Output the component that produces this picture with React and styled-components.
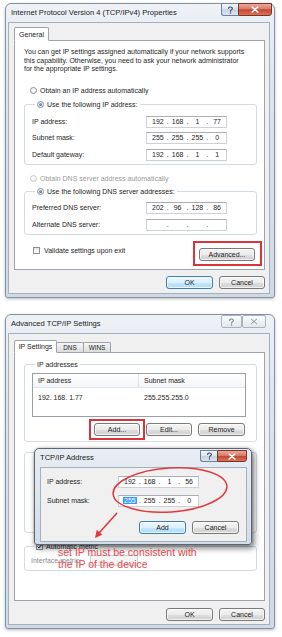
import React from "react";
import styled, { createGlobalStyle } from "styled-components";

const GlobalStyle = createGlobalStyle`
  html, body { margin: 0; padding: 0; background: #ffffff; }
  body {
    font-family: "Liberation Sans", Arial, sans-serif;
    font-size: 7px;
    color: #1e1e1e;
  }
  *, *::before, *::after { box-sizing: border-box; }
`;

const Page = styled.div`
  width: 282px;
  height: 637px;
  padding-top: 3px;
  display: flex;
  flex-direction: column;
  gap: 16px;
  overflow: hidden;
`;

const Frame = styled.div`
  position: relative;
  flex: none;
  margin-left: 5px;
  width: 270px;
  height: ${(p) => p.$h}px;
  display: flex;
  flex-direction: column;
  padding: 0 4px 3px 2px;
  border: 1px solid #8592a3;
  border-radius: 6px 6px 3px 3px;
  background: linear-gradient(180deg, #eef2f7 0%, #dbe3ec 30%, #d0dae5 100%);
  box-shadow: 0 1px 3px rgba(40, 50, 70, 0.35);
`;

const TitleBar = styled.div`
  flex: none;
  height: 18px;
  display: flex;
  align-items: flex-start;
  padding-left: ${(p) => p.$pl ?? 3}px;
`;

const Title = styled.div`
  font-size: 7.6px;
  line-height: 18px;
  color: #1a1a1a;
  white-space: nowrap;
`;

const Caption = styled.div`
  margin-left: auto;
  margin-top: ${(p) => p.$top}px;
  margin-right: ${(p) => p.$right}px;
  display: flex;
`;

const capSkins = {
  help: `
    background: linear-gradient(180deg, #f1f5fa 0%, #d9e3ee 48%, #c3d1e1 52%, #dbe6f1 100%);
    border: 1px solid #6f8196;
    border-right: none;
    border-radius: 0 0 0 3px;
  `,
  close: `
    background: linear-gradient(180deg, #e9a898 0%, #d87c68 45%, #c4472f 52%, #d8735c 100%);
    border: 1px solid #7d3328;
    border-radius: 0 0 3px 0;
  `,
  idle: `
    background: linear-gradient(180deg, #fdfdfe 0%, #eef1f5 50%, #e3e8ee 100%);
    border: 1px solid #a9b3be;
    border-radius: 2px;
  `,
};

const CapButton = styled.div`
  width: ${(p) => p.$w}px;
  height: ${(p) => p.$h}px;
  display: flex;
  align-items: center;
  justify-content: center;
  ${(p) => capSkins[p.$skin]}
`;

const HelpGlyph = ({ color }) => (
  <svg width="7" height="8" viewBox="0 0 7 8">
    <path
      d="M1.6 2.4 C1.6 0.5 5.4 0.5 5.4 2.4 C5.4 3.8 3.5 3.8 3.5 5.2"
      fill="none"
      stroke={color}
      strokeWidth="1.1"
      strokeLinecap="round"
    />
    <circle cx="3.5" cy="6.9" r="0.75" fill={color} />
  </svg>
);

const CloseGlyph = ({ color, weight }) => (
  <svg width="8" height="7" viewBox="0 0 8 7">
    <path d="M1.2 1 L6.8 6 M6.8 1 L1.2 6" stroke={color} strokeWidth={weight} strokeLinecap="round" />
  </svg>
);

const Client = styled.div`
  flex: 1;
  display: flex;
  flex-direction: column;
  padding: ${(p) => p.$pt}px ${(p) => p.$pr ?? 4}px 0 ${(p) => p.$pl ?? 5}px;
  background: #f0f0f0;
  border: 1px solid #a3b0c0;
`;

const TabStrip = styled.div`
  position: relative;
  z-index: 1;
  flex: none;
  display: flex;
  align-items: flex-end;
  height: ${(p) => p.$h}px;
`;

const Tab = styled.div`
  width: ${(p) => p.$w}px;
  height: ${(p) => (p.$active ? p.$h + 1 : p.$h - 2)}px;
  margin-bottom: ${(p) => (p.$active ? -1 : 0)}px;
  display: flex;
  align-items: center;
  justify-content: center;
  border: 1px solid #9ea4ad;
  border-bottom: ${(p) => (p.$active ? "1px solid #ffffff" : "none")};
  border-radius: 2px 2px 0 0;
  background: ${(p) => (p.$active ? "#ffffff" : "linear-gradient(180deg, #f6f6f6, #dcdcdc)")};
  font-size: ${(p) => (p.$active ? 7 : 6.4)}px;
  & + & {
    margin-left: -1px;
  }
`;

const Panel = styled.div`
  flex: none;
  height: ${(p) => p.$h}px;
  display: flex;
  flex-direction: column;
  padding: ${(p) => p.$pt}px 7px 0 9px;
  background: #ffffff;
  border: 1px solid #9ea4ad;
`;

const Intro = styled.p`
  margin: 0;
  line-height: 8.5px;
  white-space: nowrap;
`;

const OptionRow = styled.div`
  display: flex;
  align-items: center;
  gap: 3px;
  height: 10px;
  margin-top: ${(p) => p.$mt}px;
  padding-left: 6px;
  color: ${(p) => (p.$disabled ? "#9a9a9a" : "inherit")};
`;

const Radio = styled.span`
  position: relative;
  flex: none;
  width: 7px;
  height: 7px;
  border-radius: 50%;
  border: 1px solid ${(p) => (p.$disabled ? "#c8cacc" : "#8a9199")};
  background: radial-gradient(circle at 40% 35%, #ffffff 0%, #e6e8ea 100%);
  &::after {
    content: "";
    display: ${(p) => (p.$checked ? "block" : "none")};
    position: absolute;
    inset: 1px;
    border-radius: 50%;
    background: radial-gradient(circle at 40% 35%, #8fb0d6 0%, #2c4f7c 100%);
  }
`;

const Checkbox = styled.span`
  flex: none;
  width: 7px;
  height: 7px;
  display: flex;
  align-items: center;
  justify-content: center;
  border: 1px solid #8f8f8f;
  background: linear-gradient(180deg, #e4e4e4, #ffffff);
`;

const Group = styled.fieldset`
  margin: ${(p) => p.$mt}px 0 0 0;
  padding: ${(p) => p.$pt}px ${(p) => p.$pr ?? 4}px ${(p) => p.$pb}px ${(p) => p.$pl ?? 7}px;
  min-width: 0;
  min-height: ${(p) => p.$minH ?? 0}px;
  border: 1px solid #d3dce3;
  border-radius: 3px;
`;

const Legend = styled.legend`
  display: flex;
  align-items: center;
  gap: 3px;
  height: 10px;
  margin-left: 3px;
  padding: 0 2px;
  color: ${(p) => (p.$muted ? "#5a5a5a" : "inherit")};
`;

const FieldGrid = styled.div`
  display: grid;
  grid-template-columns: ${(p) => p.$labelW}px 81px;
  row-gap: ${(p) => p.$gap}px;
  align-items: center;
`;

const Label = styled.span`
  line-height: 12px;
  white-space: nowrap;
  color: ${(p) => (p.$disabled ? "#8d8d8d" : "inherit")};
`;

const IpBox = styled.div`
  width: 81px;
  height: 12px;
  display: grid;
  grid-template-columns: 1fr 4px 1fr 4px 1fr 4px 1fr;
  align-items: center;
  padding: 0 1px 0 3px;
  border: 1px solid #cdd1d6;
  border-top-color: #abafb5;
  background: #ffffff;
  line-height: 10px;
  text-align: center;
`;

const Sel = styled.span`
  background: #3399ff;
  color: #ffffff;
  padding: 0 1px;
`;

function IpField({ parts = ["", "", "", ""], selectFirst }) {
  return (
    <IpBox>
      {parts.map((part, i) => (
        <React.Fragment key={i}>
          {i > 0 && <span>.</span>}
          <span>{i === 0 && selectFirst ? <Sel>{part}</Sel> : part}</span>
        </React.Fragment>
      ))}
    </IpBox>
  );
}

const ValidateRow = styled.div`
  display: flex;
  justify-content: space-between;
  align-items: flex-start;
  margin-top: 11px;
  padding: 0 2px 0 9px;
`;

const CheckLabel = styled.div`
  display: flex;
  align-items: center;
  gap: 4px;
  height: 10px;
  color: ${(p) => (p.$disabled ? "#8d8d8d" : "inherit")};
`;

const Button = styled.div`
  width: ${(p) => p.$w}px;
  height: 13px;
  margin-top: ${(p) => p.$mt ?? 0}px;
  display: flex;
  align-items: center;
  justify-content: center;
  border: 1px solid ${(p) => (p.$default ? "#3c7fb1" : "#7a7a7a")};
  border-radius: 3px;
  background: ${(p) =>
    p.$default
      ? "linear-gradient(180deg, #ecf7fd 0%, #dcf0fb 50%, #c4e7fb 51%, #b2dbf3 100%)"
      : "linear-gradient(180deg, #f4f4f4 0%, #ececec 50%, #dedede 51%, #d0d0d0 100%)"};
  box-shadow: inset 0 0 0 1px rgba(255, 255, 255, 0.7);
  color: #1b1b1b;
  white-space: nowrap;
`;

const Marked = styled.div`
  position: relative;
  &::after {
    content: "";
    position: absolute;
    inset: ${(p) => p.$inset};
    border: 2px solid #d9343b;
    pointer-events: none;
  }
`;

const Footer = styled.div`
  flex: none;
  display: flex;
  justify-content: flex-end;
  gap: 6px;
  margin-top: ${(p) => p.$mt}px;
  padding-right: ${(p) => p.$pr ?? 0}px;
`;

const ListView = styled.div`
  height: 44px;
  border: 1px solid #9aa0a8;
  background: #ffffff;
`;

const ListHeader = styled.div`
  display: flex;
  height: 14px;
  align-items: stretch;
  background: linear-gradient(180deg, #ffffff, #f4f5f7);
  border-bottom: 1px solid #e1e4e8;
`;

const ListRow = styled.div`
  display: flex;
  height: 10px;
  margin-top: 4px;
  align-items: center;
`;

const Col = styled.div`
  width: ${(p) => (p.$w ? `${p.$w}px` : "auto")};
  flex: ${(p) => (p.$w ? "none" : "1")};
  display: flex;
  align-items: center;
  padding-left: 5px;
  border-right: ${(p) => (p.$divider ? "1px solid #e0e3e7" : "none")};
  white-space: nowrap;
`;

const ButtonRow = styled.div`
  display: flex;
  justify-content: flex-end;
  gap: 6px;
  margin-top: 6px;
  padding-right: 1px;
`;

const MetricRow = styled.div`
  display: flex;
  align-items: center;
  height: 11px;
`;

const SmallBox = styled.div`
  width: 48px;
  height: 11px;
  margin-left: 9px;
  border: 1px solid #cfd3d8;
  background: #f4f4f4;
`;

const Dialog = styled.div`
  position: absolute;
  left: 28px;
  top: 133px;
  z-index: 2;
  width: 218px;
  height: 97px;
  display: flex;
  flex-direction: column;
  padding: 0 4px 2px 5px;
  border: 1px solid #5b6674;
  border-radius: 5px 5px 3px 3px;
  background: linear-gradient(180deg, #e8edf3 0%, #d3dde8 100%);
  box-shadow: 2px 3px 6px rgba(0, 0, 0, 0.55), 0 0 2px rgba(0, 0, 0, 0.3);
`;

const DialogClient = styled.div`
  flex: 1;
  display: flex;
  flex-direction: column;
  padding: 8px 7px 0 6px;
  background: #f0f0f0;
  border: 1px solid #a3b0c0;
`;

const Scribble = styled.svg`
  position: absolute;
  left: 80px;
  top: 147px;
  z-index: 3;
  overflow: visible;
  pointer-events: none;
`;

const Note = styled.div`
  position: absolute;
  left: 52px;
  top: 231px;
  z-index: 3;
  font-size: 10.5px;
  line-height: 12px;
  color: #e34a4f;
  white-space: nowrap;
`;

function CheckMark() {
  return (
    <svg width="5" height="5" viewBox="0 0 5 5">
      <path d="M0.6 2.6 L2 4 L4.4 0.8" fill="none" stroke="#2b3d55" strokeWidth="1" />
    </svg>
  );
}

function PropertiesWindow() {
  return (
    <Frame $h={295}>
      <TitleBar>
        <Title>Internet Protocol Version 4 (TCP/IPv4) Properties</Title>
        <Caption $top={-1} $right={-2}>
          <CapButton $skin="help" $w={17} $h={13}>
            <HelpGlyph color="#3d4c60" />
          </CapButton>
          <CapButton $skin="close" $w={34} $h={13}>
            <CloseGlyph color="#ffffff" weight={1.6} />
          </CapButton>
        </Caption>
      </TitleBar>
      <Client $pt={4}>
        <TabStrip $h={13}>
          <Tab $active $w={35} $h={13}>General</Tab>
        </TabStrip>
        <Panel $h={230} $pt={7}>
          <Intro>
            You can get IP settings assigned automatically if your network supports
            <br />
            this capability. Otherwise, you need to ask your network administrator
            <br />
            for the appropriate IP settings.
          </Intro>
          <OptionRow $mt={12}>
            <Radio />
            Obtain an IP address automatically
          </OptionRow>
          <Group $mt={4} $pt={6} $pb={3}>
            <Legend>
              <Radio $checked />
              Use the following IP address:
            </Legend>
            <FieldGrid $labelW={114} $gap={4.5}>
              <Label>IP address:</Label>
              <IpField parts={["192", "168", "1", "77"]} />
              <Label>Subnet mask:</Label>
              <IpField parts={["255", "255", "255", "0"]} />
              <Label>Default gateway:</Label>
              <IpField parts={["192", "168", "1", "1"]} />
            </FieldGrid>
          </Group>
          <OptionRow $mt={9} $disabled>
            <Radio $disabled />
            Obtain DNS server address automatically
          </OptionRow>
          <Group $mt={3} $pt={5} $pb={3}>
            <Legend>
              <Radio $checked />
              Use the following DNS server addresses:
            </Legend>
            <FieldGrid $labelW={114} $gap={5}>
              <Label>Preferred DNS server:</Label>
              <IpField parts={["202", "96", "128", "86"]} />
              <Label>Alternate DNS server:</Label>
              <IpField />
            </FieldGrid>
          </Group>
          <ValidateRow>
            <CheckLabel>
              <Checkbox />
              Validate settings upon exit
            </CheckLabel>
            <Marked $inset="-5px -7px -5px -6px">
              <Button $w={56} $mt={2}>Advanced...</Button>
            </Marked>
          </ValidateRow>
        </Panel>
        <Footer $mt={6}>
          <Button $w={47} $default>OK</Button>
          <Button $w={46}>Cancel</Button>
        </Footer>
      </Client>
    </Frame>
  );
}

function AddressDialog() {
  return (
    <Dialog>
      <TitleBar $pl={0}>
        <Title>TCP/IP Address</Title>
        <Caption $top={1} $right={0}>
          <CapButton $skin="help" $w={17} $h={12}>
            <HelpGlyph color="#3d4c60" />
          </CapButton>
          <CapButton $skin="close" $w={30} $h={12}>
            <CloseGlyph color="#ffffff" weight={1.6} />
          </CapButton>
        </Caption>
      </TitleBar>
      <DialogClient>
        <FieldGrid $labelW={71} $gap={7}>
          <Label>IP address:</Label>
          <IpField parts={["192", "168", "1", "56"]} />
          <Label>Subnet mask:</Label>
          <IpField parts={["255", "255", "255", "0"]} selectFirst />
        </FieldGrid>
        <Footer $mt={14}>
          <Button $w={47} $default>Add</Button>
          <Button $w={47}>Cancel</Button>
        </Footer>
      </DialogClient>
    </Dialog>
  );
}

function AdvancedWindow() {
  return (
    <Frame $h={315}>
      <TitleBar>
        <Title>Advanced TCP/IP Settings</Title>
        <Caption $top={0} $right={4}>
          <CapButton $skin="idle" $w={21} $h={13}>
            <HelpGlyph color="#7d8895" />
          </CapButton>
          <CapButton $skin="idle" $w={24} $h={13}>
            <CloseGlyph color="#8a95a2" weight={1} />
          </CapButton>
        </Caption>
      </TitleBar>
      <Client $pt={6}>
        <TabStrip $h={12}>
          <Tab $active $w={43} $h={12}>IP Settings</Tab>
          <Tab $w={28} $h={12}>DNS</Tab>
          <Tab $w={28} $h={12}>WINS</Tab>
        </TabStrip>
        <Panel $h={249} $pt={6}>
          <Group $mt={0} $pt={4} $pb={5} $pr={10}>
            <Legend>IP addresses</Legend>
            <ListView>
              <ListHeader>
                <Col $w={106} $divider>IP address</Col>
                <Col>Subnet mask</Col>
              </ListHeader>
              <ListRow>
                <Col $w={106}>192. 168. 1.77</Col>
                <Col>255.255.255.0</Col>
              </ListRow>
            </ListView>
            <ButtonRow>
              <Marked $inset="-4px -5px -4px -5px">
                <Button $w={46}>Add...</Button>
              </Marked>
              <Button $w={46}>Edit...</Button>
              <Button $w={47}>Remove</Button>
            </ButtonRow>
          </Group>
          <Group $mt={5} $pt={0} $pb={4} $minH={86}>
            <Legend>Default gateways:</Legend>
          </Group>
          <Group $mt={8} $pt={4} $pb={4} $pl={6}>
            <Legend>
              <Checkbox>
                <CheckMark />
              </Checkbox>
              Automatic metric
            </Legend>
            <MetricRow>
              <Label $disabled>Interface metric:</Label>
              <SmallBox />
            </MetricRow>
          </Group>
        </Panel>
        <Footer $mt={7}>
          <Button $w={47}>OK</Button>
          <Button $w={46}>Cancel</Button>
        </Footer>
      </Client>
      <AddressDialog />
      <Scribble width="150" height="80" viewBox="0 0 150 80">
        <ellipse
          cx="84"
          cy="28"
          rx="57"
          ry="22"
          fill="none"
          stroke="#e0393f"
          strokeWidth="1.5"
          transform="rotate(-4 84 28)"
        />
        <path d="M31 51 L13 71" stroke="#e0393f" strokeWidth="1.6" />
        <polygon points="9,76 16.4,72.8 10.8,67.8" fill="#e0393f" />
      </Scribble>
      <Note>
        set IP must be consistent with
        <br />
        the IP of the device
      </Note>
    </Frame>
  );
}

export default function App() {
  return (
    <>
      <GlobalStyle />
      <Page>
        <PropertiesWindow />
        <AdvancedWindow />
      </Page>
    </>
  );
}
